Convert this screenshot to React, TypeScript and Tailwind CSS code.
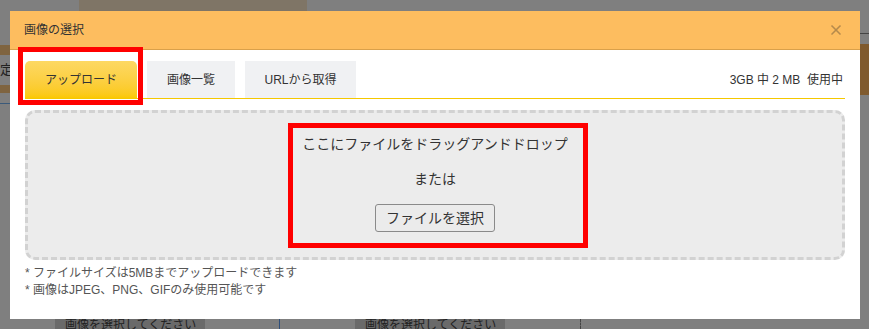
import { X } from 'lucide-react';

const jp = { fontFamily: '"Liberation Sans", "Noto Sans CJK JP", sans-serif' };

function Backdrop() {
  // dimmed page behind the modal; only its edges peek out
  return (
    <div className="w-full h-full flex flex-col">
      <div className="h-[11px] flex shrink-0">
        <div className="ml-[79px] w-[228px] bg-[#7f7566]" />
      </div>
      <div className="flex-1 flex justify-between">
        <div className="w-[10px] flex flex-col pt-[34px]">
          <div className="h-[10px] bg-[#7f6440]" />
          <div className="mt-[7px] text-[13px] leading-[16px] text-[#222]">定</div>
          <div className="mt-[7px] h-[8px] bg-[#7f6440]" />
          <div className="mt-[10px] h-px bg-[#3b5a7a]" />
        </div>
        <div className="w-[9px] flex flex-col pt-[22px]">
          <div className="h-px bg-[#444]" />
          <div className="mt-[10px] h-[51px] bg-[#7f5a2e]" />
        </div>
      </div>
      <div className="h-[10px] flex shrink-0 overflow-hidden">
        <div className="ml-[55px] w-[150px] bg-[#6a6a6a] pl-[10px] text-[12px] leading-[12px] text-[#222]">
          画像を選択してください
        </div>
        <div className="ml-[74px] w-px bg-[#2f4f7a]" />
        <div className="ml-[75px] w-[150px] bg-[#6a6a6a] pl-[10px] text-[12px] leading-[12px] text-[#222]">
          画像を選択してください
        </div>
        <div className="ml-[75px] border-l border-dashed border-[#444]" />
      </div>
    </div>
  );
}

function Tab({ label, active, width }: { label: string; active?: boolean; width: string }) {
  return (
    <div
      className={`${width} h-[37px] flex items-center justify-center text-[12px] text-[#333] ${
        active ? 'rounded-t-[5px] bg-gradient-to-b from-[#fdd862] to-[#fbc800]' : 'bg-[#f0f1f3]'
      }`}
    >
      {label}
    </div>
  );
}

export default function App() {
  return (
    <div className="relative w-[869px] h-[329px] bg-[#7f7f7f] overflow-hidden" style={jp}>
      <Backdrop />

      {/* Modal */}
      <div className="absolute left-[10px] top-[11px] w-[850px] h-[308px] bg-white flex flex-col">
        <div className="h-[39px] shrink-0 bg-[#fdbd5f] border-b border-[#d9a04a] flex items-center justify-between pl-[14px] pr-[16px]">
          <span className="text-[12px] text-[#333]">画像の選択</span>
          <X className="w-[16px] h-[16px] text-[#b58a4c]" strokeWidth={2.5} />
        </div>

        <div className="px-[15px] pt-[11px] flex flex-col">
          {/* Tabs */}
          <div className="flex items-end gap-[10px] border-b border-[#f5c800]">
            <Tab label="アップロード" active width="w-[112px]" />
            <Tab label="画像一覧" width="w-[88px]" />
            <Tab label="URLから取得" width="w-[111px]" />
            <div className="ml-auto h-[37px] flex items-center pr-[2px] text-[12px] text-[#333] whitespace-pre">
              3GB 中 2 MB  使用中
            </div>
          </div>

          {/* Drop zone */}
          <div className="mt-[11px] h-[150px] rounded-[10px] border-[3px] border-dashed border-[#d2d2d2] bg-[#ececec] flex flex-col items-center gap-[15px] pt-[21px] text-[#333]">
            <div className="text-[14px] leading-[20px]">ここにファイルをドラッグアンドドロップ</div>
            <div className="text-[14px] leading-[20px]">または</div>
            <button className="w-[120px] h-[28px] rounded-[3px] border border-[#8a8a8a] bg-[#ebebeb] text-[14px] text-[#333]">
              ファイルを選択
            </button>
          </div>

          {/* Notes */}
          <div className="mt-[5px] text-[12px] leading-[17px] text-[#555]">
            <div>* ファイルサイズは5MBまでアップロードできます</div>
            <div>* 画像はJPEG、PNG、GIFのみ使用可能です</div>
          </div>
        </div>
      </div>

      {/* Annotation highlights */}
      <div className="absolute left-[18px] top-[47px] w-[125px] h-[58px] border-[5px] border-[#ff0000]" />
      <div className="absolute left-[288px] top-[123px] w-[300px] h-[125px] border-[5px] border-[#ff0000]" />
    </div>
  );
}
